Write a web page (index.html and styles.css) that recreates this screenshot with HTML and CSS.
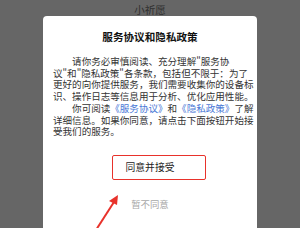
FILE: index.html
```html
<!DOCTYPE html>
<html lang="zh-CN">
<head>
<meta charset="utf-8">
<link rel="stylesheet" href="styles.css">
</head>
<body>
<div class="page">
  <header class="topbar">小祈愿</header>
  <div class="dialog">
    <h1 class="title">服务协议和隐私政策</h1>
    <div class="body">
      <p class="para">请你务必审慎阅读、充分理解"服务协<br>议"和"隐私政策"各条款，包括但不限于：为了<br>更好的向你提供服务，我们需要收集你的设备标<br>识、操作日志等信息用于分析、优化应用性能。</p>
      <p class="para">你可阅读<span class="link">《服务协议》</span>和<span class="link">《隐私政策》</span>了解<br>详细信息。如果你同意，请点击下面按钮开始接<br>受我们的服务。</p>
    </div>
    <div class="actions">
      <div class="agree">同意并接受</div>
      <div class="decline">暂不同意</div>
    </div>
  </div>
  <div class="mark"></div>
  <svg class="arrow" width="300" height="228" viewBox="0 0 300 228">
    <line x1="96" y1="230" x2="114" y2="202" stroke="#e8322b" stroke-width="2"/>
    <polygon points="118,195 109,201 117,205" fill="#e8322b"/>
  </svg>
</div>
</body>
</html>
```

FILE: styles.css
```css
html, body {
  margin: 0;
  padding: 0;
}
body {
  width: 300px;
  height: 228px;
  overflow: hidden;
  background: #666666;
  font-family: "Noto Sans CJK SC", "Noto Sans", sans-serif;
}
.page {
  position: relative;
  width: 300px;
  height: 228px;
}
.topbar {
  height: 20px;
  line-height: 20px;
  text-align: center;
  font-size: 10.5px;
  color: #2f2f2f;
}
.dialog {
  position: absolute;
  left: 43px;
  top: 16px;
  width: 214px;
  height: 212px;
  overflow: hidden;
  background: #ffffff;
  border-radius: 4px 4px 0 0;
  display: flex;
  flex-direction: column;
}
.title {
  margin: 14px 0 0;
  font-size: 10.6px;
  line-height: 13px;
  font-weight: bold;
  text-align: center;
  color: #111111;
}
.body {
  padding: 13px 10px 0;
}
.para {
  margin: 0;
  font-size: 9.55px;
  line-height: 11.7px;
  text-indent: 2em;
  color: #333333;
  white-space: nowrap;
}
.link {
  color: #4a78d6;
}
.actions {
  display: flex;
  flex-direction: column;
  align-items: center;
}
.agree {
  margin-top: 22px;
  font-size: 9.8px;
  line-height: 14px;
  color: #222222;
}
.decline {
  margin-top: 23px;
  font-size: 9.4px;
  line-height: 14px;
  color: #a8a8a8;
}
.mark {
  position: absolute;
  left: 112px;
  top: 155px;
  width: 92px;
  height: 23px;
  border: 1.5px solid #e8322b;
  border-radius: 2px;
}
.arrow {
  position: absolute;
  left: 0;
  top: 0;
}
```
